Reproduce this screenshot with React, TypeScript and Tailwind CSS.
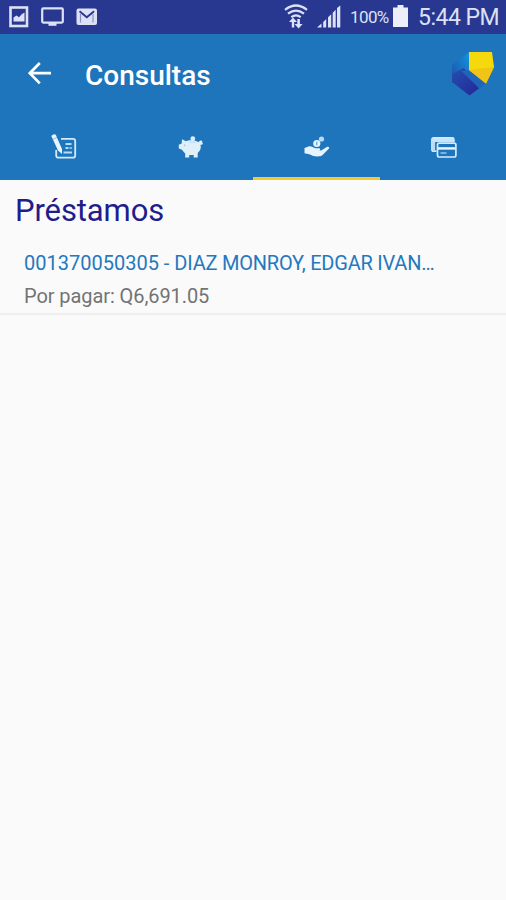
import type { ReactNode } from "react";

interface Loan {
  account: string;
  holder: string;
  due: string;
}

const LOANS: Loan[] = [
  { account: "001370050305", holder: "DIAZ MONROY, EDGAR IVAN…", due: "Q6,691.05" },
];

function StatusBar() {
  return (
    <div className="flex h-[34px] items-start bg-[#283890] text-[#dde1f6]">
      <svg className="ml-[9px] mt-[6px] shrink-0" width="20" height="22" viewBox="0 0 20 22">
        <rect x="1.5" y="1.5" width="16.5" height="18.5" fill="none" stroke="currentColor" strokeWidth="2.6" />
        <path d="M4.5 15.5V11.5l3-2 2.5 1.8L13 8l2.5-1.5v9z" fill="currentColor" />
      </svg>
      <svg className="ml-[12px] mt-[7px] shrink-0" width="23" height="20" viewBox="0 0 23 20">
        <rect x="1.2" y="1.4" width="20.6" height="14.2" rx="1" fill="none" stroke="currentColor" strokeWidth="2.2" />
        <path d="M7.5 16h8v2.8h-8z" fill="currentColor" />
      </svg>
      <svg className="ml-[12px] mt-[8px] shrink-0" width="22" height="18" viewBox="0 0 22 18">
        <rect x="0.5" y="0.5" width="20.5" height="16.5" rx="2" fill="currentColor" />
        <path d="M4.5 14.5V6M17 14.5V6" fill="none" stroke="#8790c6" strokeWidth="1.2" />
        <path d="M3.5 3.2l7.3 6 7.3-6" fill="none" stroke="#283890" strokeWidth="1.9" />
      </svg>

      <svg className="ml-auto mt-[4px] shrink-0" width="24" height="25" viewBox="0 0 24 25">
        <g fill="none" stroke="currentColor" strokeWidth="2.2">
          <path d="M1 5.8Q12-2.8 23 5.8" />
          <path d="M4 9.7Q12 3.6 20 9.7" />
          <path d="M7.3 13.2Q12 9.6 16.7 13.2" />
        </g>
        <path d="M9 13.5l4 4.5h-2.8v5.5H7.8V18H5zM14.6 24.6l-4-4.6h2.7v-5h2.6v5h2.7z" fill="currentColor" />
      </svg>
      <svg className="ml-[8px] mt-[5px] shrink-0" width="25" height="23" viewBox="0 0 25 23">
        <path
          d="M1 22.5l4.5-4v4zM7.2 17l3-3v8.5h-3zM12 12.2l3.2-3v13.3H12zM16.7 7.7l3-3v17.8h-3zM21 3l3.3-2.5v22H21z"
          fill="currentColor"
        />
      </svg>
      <span className="ml-[9px] mt-[6px] w-[39px] whitespace-nowrap text-[17px] leading-[22px] tracking-[-0.6px]">
        100%
      </span>
      <svg className="ml-[4px] mt-[5px] shrink-0" width="15" height="22" viewBox="0 0 15 22">
        <path d="M4.5 0h6v2.5H15V22H0V2.5h4.5z" fill="#eceffa" />
      </svg>
      <span className="ml-[10px] mt-[4px] w-[88px] whitespace-nowrap text-[23px] leading-[28px] tracking-[-0.5px]">
        5:44 PM
      </span>
    </div>
  );
}

function Logo() {
  return (
    <svg className="mr-[11px] mt-[17px] shrink-0" width="43" height="45" viewBox="0 0 43 45">
      <defs>
        <linearGradient id="logo-top" x1="0" y1="1" x2="1" y2="0">
          <stop offset="0" stopColor="#1d4fa8" />
          <stop offset="1" stopColor="#1495df" />
        </linearGradient>
        <linearGradient id="logo-base" x1="0" y1="0" x2="1" y2="1">
          <stop offset="0" stopColor="#2450ac" />
          <stop offset="1" stopColor="#25259a" />
        </linearGradient>
      </defs>
      <path d="M0 14L17 1v19L0 32z" fill="url(#logo-top)" />
      <path d="M0 23l12-6 15 20.5-9.5 7L0 31z" fill="url(#logo-base)" />
      <path d="M17 19l17 13.5-6.5 5L9 20z" fill="#1f66bb" />
      <path d="M17 1h23l2 15-8 16.5L17 19z" fill="#f5d90d" />
      <path d="M17 19l25-3-8 16.5z" fill="#f2c416" />
    </svg>
  );
}

function Toolbar() {
  return (
    <div className="flex h-[82px] items-start">
      <svg className="ml-[28px] mt-[28px] shrink-0" width="24" height="23" viewBox="0 0 24 23">
        <path d="M23 11.2H2M11.8 1L1.8 11.2l10 10.2" fill="none" stroke="#fff" strokeWidth="2.7" />
      </svg>
      <h1 className="ml-[33px] mt-[25px] flex-1 text-[28px] font-medium leading-[34px] text-white">Consultas</h1>
      <Logo />
    </div>
  );
}

function NotesIcon() {
  return (
    <svg width="26" height="26" viewBox="0 0 26 26">
      <path
        d="M10 4.8h12q2.200 0 2.200 2.200v14.500q0 2.200-2.200 2.200H7.500q-2.300 0-2.300-2.200V16"
        fill="none"
        stroke="#d3eafa"
        strokeWidth="1.800"
      />
      <path d="M14.500 10h6M14.500 14h3M12.500 18.500h8.500" stroke="#b6dbf5" strokeWidth="1.900" />
      <path d="M18.500 14h2.500" stroke="#8cc0e6" strokeWidth="1.900" />
      <path d="M.3 2Q2.500-.5 4.800.8L11 15v5l-4-3.500z" fill="#e6f4fd" />
      <path d="M1.800 5.500l4.200-2" stroke="#6fb0df" strokeWidth=".8" />
    </svg>
  );
}

function PiggyIcon() {
  return (
    <svg width="26" height="22" viewBox="0 0 26 22">
      <circle cx="14.8" cy="2.7" r="2.4" fill="#d9eefa" />
      <path
        d="M4 3.2l4 2.1c3-1.4 9-1.5 12.3 1 .8-.5 1.2-1.8 2.5-1.8 1.7 0 2 1.5 1.3 2.6l1 .3c-.5 1.2-1.5 1.5-2.6 1.4 1 3.2-.3 6-2.8 8.2v4.4h-4v-2.3h-4.5v2.3h-4v-4C6 16.6 5 15.4 4 13.8L.8 12.5V8.7l2.9-1.2z"
        fill="#dff0fa"
      />
      <path d="M11.500 6.400q3-.7 6 .3" fill="none" stroke="#b0d5ef" strokeWidth=".8" />
      <circle cx="6.500" cy="9.300" r=".7" fill="#7fb8e0" />
    </svg>
  );
}

function LoanIcon() {
  return (
    <svg width="26" height="22" viewBox="0 0 26 22">
      <circle cx="17.5" cy="3" r="2.6" fill="#b6dbf5" />
      <circle cx="12.8" cy="7.5" r="3.6" fill="#e6f4fd" />
      <path d="M12.8 5.7v3.6" stroke="#4f9bd2" strokeWidth="1.1" />
      <path
        d="M.5 12l4-1.500c3-.8 4.500 1.500 7 1.700h3.700c1.500.2 1.400 1.900 0 2.200H11h6.200l6-3.600c1.600-.6 2.700.7 1.600 1.900l-6.500 6.500c-1.500 1.200-5.700 1.600-9 .7l-4-1.700L.5 17.300z"
        fill="#e6f4fd"
      />
    </svg>
  );
}

function CardsIcon() {
  return (
    <svg width="26" height="22" viewBox="0 0 26 22">
      <path
        d="M5.500 14.200H2.500q-1.500 0-1.500-1.500V2.500Q1 1 2.500 1h18.800q1.500 0 1.500 1.500V5"
        fill="none"
        stroke="#d3eafa"
        strokeWidth="1.800"
      />
      <path d="M2 3.300h20" stroke="#c8e4f8" strokeWidth="3.500" />
      <path d="M3 5v8" stroke="#b6dbf5" strokeWidth="2.200" />
      <rect x="6.500" y="6.200" width="18.400" height="13.800" rx="1.700" fill="#1e75bc" stroke="#d3eafa" strokeWidth="1.700" />
      <path d="M7 11.400h17.500" stroke="#e6f4fd" strokeWidth="2.500" />
      <path d="M9.500 16h6" stroke="#9fcdef" strokeWidth="1.400" />
    </svg>
  );
}

function Tab({ children, active = false }: { children: ReactNode; active?: boolean }) {
  return (
    <button
      className={`flex flex-1 items-start justify-center border-b-[3px] pl-[2px] ${
        active ? "border-[#f3c92d]" : "border-transparent"
      }`}
    >
      {children}
    </button>
  );
}

function LoanRow({ loan }: { loan: Loan }) {
  return (
    <li className="border-b-2 border-[#eeeeee] pb-[4px] pl-[24px]">
      <p className="whitespace-nowrap text-[20px] leading-[26px] text-[#2478bd]">
        {loan.account} - <span className="tracking-[-0.22px]">{loan.holder}</span>
      </p>
      <p className="mt-[7px] whitespace-nowrap text-[20px] leading-[26px] tracking-[-0.08px] text-[#737373]">
        Por pagar: {loan.due}
      </p>
    </li>
  );
}

export default function App() {
  return (
    <div className="min-h-[900px] w-[506px] overflow-hidden bg-[#fafafa] font-['Roboto',sans-serif]">
      <StatusBar />
      <header className="bg-[#1e75bc]">
        <Toolbar />
        <nav className="flex h-[64px]">
          <Tab>
            <span className="mt-[18px]">
              <NotesIcon />
            </span>
          </Tab>
          <Tab>
            <span className="mt-[20px]">
              <PiggyIcon />
            </span>
          </Tab>
          <Tab active>
            <span className="mt-[20px]">
              <LoanIcon />
            </span>
          </Tab>
          <Tab>
            <span className="mt-[21px]">
              <CardsIcon />
            </span>
          </Tab>
        </nav>
      </header>
      <main>
        <h2 className="ml-[15px] pt-[13px] text-[31px] leading-[36px] tracking-[-0.1px] text-[#1f1c8c]">Préstamos</h2>
        <ul className="mt-[21px]">
          {LOANS.map((loan) => (
            <LoanRow key={loan.account} loan={loan} />
          ))}
        </ul>
      </main>
    </div>
  );
}
